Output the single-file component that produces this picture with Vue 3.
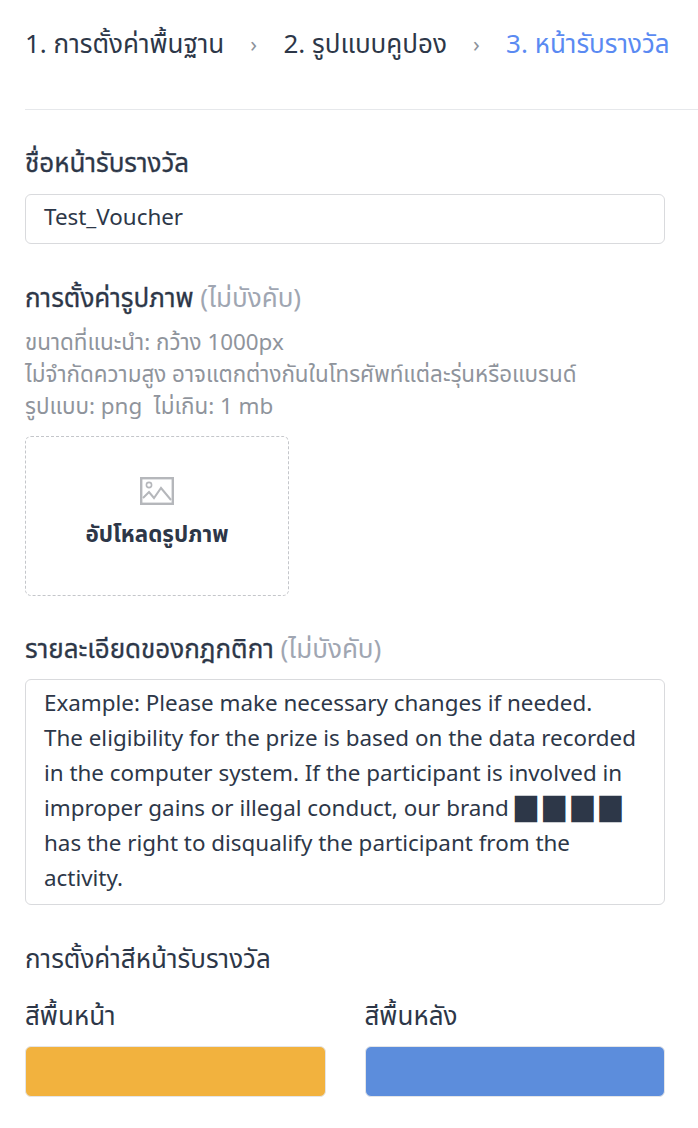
<script setup>
const steps = ['1. การตั้งค่าพื้นฐาน', '2. รูปแบบคูปอง', '3. หน้ารับรางวัล']
const rulesStart = 'Example: Please make necessary changes if needed.\nThe eligibility for the prize is based on the data recorded in the computer system. If the participant is involved in improper gains or illegal conduct, our brand '
const rulesEnd = ' has the right to disqualify the participant from the activity.'
</script>

<template>
  <div class="page">
    <div class="stepper">
      <template v-for="(s, i) in steps" :key="s">
        <span class="chev" v-if="i > 0">›</span>
        <span class="step" :class="{ active: i === 2 }">{{ s }}</span>
      </template>
    </div>
    <div class="form">
      <div class="label first">ชื่อหน้ารับรางวัล</div>
      <div class="input">Test_Voucher</div>

      <div class="label second">การตั้งค่ารูปภาพ <span class="opt">(ไม่บังคับ)</span></div>
      <div class="hint">
        <div>ขนาดที่แนะนำ: กว้าง 1000px</div>
        <div>ไม่จำกัดความสูง อาจแตกต่างกันในโทรศัพท์แต่ละรุ่นหรือแบรนด์</div>
        <div>รูปแบบ: png&nbsp; ไม่เกิน: 1 mb</div>
      </div>
      <div class="upload">
        <svg class="pic" width="34" height="28" viewBox="0 0 34 28" fill="none" stroke="#b5b7bb" stroke-width="2.4">
          <rect x="1.2" y="1.2" width="31.6" height="25.6" />
          <circle cx="9" cy="8" r="2.6" stroke-width="1.6" />
          <path d="M3 21l6-6 5 6 7-10 10 12" stroke-width="2" />
        </svg>
        <span class="upload-text">อัปโหลดรูปภาพ</span>
      </div>

      <div class="label third">รายละเอียดของกฎกติกา <span class="opt">(ไม่บังคับ)</span></div>
      <div class="area">{{ rulesStart }}<span class="blk">█</span> <span class="blk">█</span> <span class="blk">█</span> <span class="blk">█</span>{{ rulesEnd }}</div>

      <div class="label fourth">การตั้งค่าสีหน้ารับรางวัล</div>
      <div class="colors">
        <div class="col">
          <div class="label">สีพื้นหน้า</div>
          <div class="swatch orange"></div>
        </div>
        <div class="col">
          <div class="label">สีพื้นหลัง</div>
          <div class="swatch blue"></div>
        </div>
      </div>
    </div>
  </div>
</template>

<style>
html, body { margin: 0; background: #fff; }
</style>

<style scoped>
.page {
  width: 698px;
  height: 1128px;
  overflow: hidden;
  box-sizing: border-box;
  padding-left: 25px;
  font-family: "Noto Sans", "Noto Sans Thai", "Noto Sans CJK SC", sans-serif;
  color: #2d3748;
  font-size: 22.4px;
}
.stepper {
  display: flex;
  align-items: center;
  border-bottom: 1px solid #e6e8eb;
  padding-bottom: 20px;
  height: 89px;
  font-size: 26px;
}
.step { white-space: nowrap; }
.step.active { color: #5a8af2; }
.chev { color: #8d929b; width: 59.2px; text-align: center; font-size: 22px; position: relative; top: -2px; }
.form { width: 640px; }
.label { font-size: 26px; line-height: 34px; }
.first, .second, .third { -webkit-text-stroke: 0.3px #2d3748; }
.first { margin-top: 35px; }
.input {
  margin-top: 15px;
  height: 50px;
  box-sizing: border-box;
  border: 1px solid #d9dadd;
  border-radius: 6px;
  padding: 0 18px;
  line-height: 44px;
}
.second { margin-top: 36px; }
.opt { color: #a0a6b2; -webkit-text-stroke: 0; }
.hint { margin-top: 12px; color: #8f949c; line-height: 32px; }
.upload {
  margin-top: 14px;
  width: 264px;
  height: 160px;
  box-sizing: border-box;
  border: 1px dashed #c4c6ca;
  border-radius: 6px;
  display: flex;
  flex-direction: column;
  align-items: center;
  padding-top: 40px;
  gap: 14px;
}
.upload-text { font-weight: 700; line-height: 30px; }
.third { margin-top: 35px; }
.area {
  margin-top: 14px;
  height: 226px;
  box-sizing: border-box;
  border: 1px solid #d9dadd;
  border-radius: 6px;
  padding: 5px 18px 0;
  line-height: 35px;
  white-space: pre-wrap;
}
.blk { display: inline-block; transform: translateY(1px) scaleY(1.18); }
.fourth { margin-top: 36px; }
.colors { display: flex; gap: 39px; margin-top: 23px; }
.col { flex: 1; }
.swatch { margin-top: 14px; height: 51px; border-radius: 6px; border: 1px solid #e4e5e7; box-sizing: border-box; }
.orange { background: #f2b23e; }
.blue { background: #5c8ddc; }
</style>
